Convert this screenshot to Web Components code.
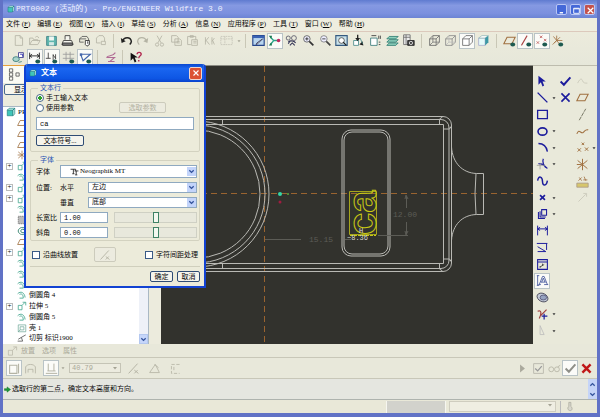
<!DOCTYPE html>
<html lang="zh-CN">
<head>
<meta charset="utf-8">
<title>PRT0002 (活动的) - Pro/ENGINEER Wildfire 3.0</title>
<style>
html,body{margin:0;height:100%}
body{font:7px/10px "Liberation Serif","Noto Sans CJK SC",serif;color:#080808;background:#e7e7da}
</style>
</head>
<body>
<pe-window></pe-window>
<script>
const N='#1c1c9c', G='#b4b3a4', K='#4a4a46', B='#a07040', T='#46a890';
const chk='M2 8l4 4 8-9';
const eye=`<ellipse cx="12" cy="13" rx="3" ry="2.5" fill="#1d5a50" stroke="none"/>`;
const cube=(c,f='none')=>`<path d="M2 6h8v8H2zM2 6l4-4h8v8l-4 4M10 6l4-4" stroke="${c}" fill="${f}"/>`;
const ICONS={
 part:`<path d="M2 5h9v9H2z" fill="#3fc6ba" stroke="#187a78"/><path d="M2 5l3-3h9l-3 3zM11 5l3-3v9l-3 3z" fill="#bff4ec" stroke="#187a78"/>`,
 new:`<path d="M4 2h6l3 3v9H4zM10 2v3h3" stroke="${G}"/>`,
 open:`<path d="M2 13V5h4l1 2h5v2M2 13l3-5h10l-3 5zM9 4c2-2 4-1 4 1" stroke="${G}"/>`,
 save:`<path d="M2 3h12v11H2z" fill="#5fb6ae" stroke="#3b7f84"/><path d="M5 3h6v5H5z" fill="#eef6f3" stroke="none"/><path d="M5 10h6v4H5z" fill="#d5e9e6" stroke="none"/>`,
 print:`<path d="M5 7V2h6v5M3 8h10l2 5H1z" fill="#f5f5ee" stroke="#333"/><path d="M2 11h12v3H2z" fill="#777" stroke="#333"/>`,
 lock:`<path d="M2 10V6l3-3h6l2 3v2M2 6h8M2 10h5" stroke="#555"/><path d="M9 8h5v5l-3 2-2-2z" fill="#fff" stroke="#222"/><path d="M12 9v3" stroke="#222"/>`,
 mail:`<path d="M3 11V5l3-3h5l2 3v4M3 11h5M9 9h5v4H9z" stroke="${G}"/>`,
 undo:`<path d="M3 9c2-6 10-6 11 0 0 2-1 3-2 4" stroke="#222" stroke-width="1.8"/><path d="M1 5l1 6 5-2z" fill="#222" stroke="none"/>`,
 redo:`<path d="M13 9C11 3 3 3 2 9c0 2 1 3 2 4" stroke="${G}" stroke-width="1.5"/><path d="M15 5l-1 6-5-2z" fill="${G}" stroke="none"/>`,
 cut:`<path d="M5 2l5 9M11 2L6 11" stroke="${G}"/><circle cx="5" cy="13" r="2" stroke="${G}"/><circle cx="11" cy="13" r="2" stroke="${G}"/>`,
 copy:`<path d="M2 2h6l2 2v6H2zM6 6h6l2 2v6H6zM8 9h4M8 11h4" stroke="${G}"/>`,
 paste:`<path d="M2 3h10v4M2 3v10h4M5 2h4v2H5zM7 7h7v7H7zM9 9h4M9 11h4" stroke="${G}"/>`,
 regen:`<path d="M3 4v9M3 9l4-5M4 8l4 5M11 4v9M11 9l3-4M12 8l2 5" stroke="${G}"/>`,
 sel:`<path d="M1 3h14v10H1zM1 6h14M6 3v10" stroke="#c4c3b6" stroke-dasharray="2 1"/>`,
 repaint:`<path d="M1 2h14v12H1z" fill="#b8d5ef" stroke="#24448a" stroke-width="1.4"/><path d="M1 2h14v3H1z" fill="#3a62b4" stroke="none"/><path d="M13 6l-6 6-2 1 1-2z" fill="#fff" stroke="#335"/>`,
 spin:`<path d="M7 8h6M7 8L3 4M7 8l-4 5" stroke="#2ba58a" stroke-width="1.6"/><circle cx="13" cy="8" r="2.2" fill="#c02860" stroke="none"/><path d="M1 2l4 0-1 4zM1 14l4 0-1-4z" fill="#1a7a50" stroke="none"/>`,
 orient:`<circle cx="4" cy="5" r="2.5" stroke="#556"/><circle cx="11" cy="5" r="3" stroke="#556"/><path d="M4 10c3-3 8-1 9 1M6 14l3-3 3 3M4 12l2-3" stroke="#335" stroke-width="1.3"/>`,
 zin:`<circle cx="6" cy="6" r="4" fill="#eef" stroke="#555"/><path d="M9 9l5 5" stroke="#333" stroke-width="2"/><path d="M4 6h4M6 4v4" stroke="#222"/>`,
 zout:`<circle cx="6" cy="6" r="4" fill="#eef" stroke="#777"/><path d="M9 9l5 5" stroke="#444" stroke-width="2"/><path d="M4 6h4" stroke="#222"/>`,
 fit:`<path d="M1 2h14v12H1z" fill="#c9e2ea" stroke="#355a80" stroke-width="1.4"/><circle cx="8" cy="8" r="3.5" fill="#fff" stroke="#444"/><path d="M10 10l4 4" stroke="#222" stroke-width="1.6"/>`,
 reor:`<path d="M2 8h6v6H2z" fill="#fff" stroke="#488"/><path d="M7 1v5" stroke="#222" stroke-width="1.6"/><path d="M4 5h6L7 9zM14 14l-5-1 4-4z" fill="#222" stroke="none"/><path d="M10 5l3 7" stroke="#488"/>`,
 views:`<path d="M2 5h8v9H2z" fill="#fff" stroke="#377"/><path d="M3 2h6M12 2v4M14 2v4M12 10h2M12 13h2" stroke="#333"/>`,
 layers:`<path d="M1 14l3-3h11l-3 3zM1 10l3-3h11l-3 3zM1 6l3-3h11l-3 3z" fill="#8fd0bc" stroke="#2b7a70"/>`,
 vmgr:`<path d="M2 1h8v12H2zM2 4h8M5 1v12" fill="#eee" stroke="#666"/><path d="M7 8h8v6H7z" fill="#444" stroke="#222"/><circle cx="11" cy="11" r="2" stroke="#eee"/>`,
 wire:cube('#666')+`<path d="M6 10h8M6 2v8l-4 4" stroke="#777"/>`,
 hidden:cube('#888')+`<path d="M6 10h8M6 2v8l-4 4" stroke="#bbb"/>`,
 nohid:cube('#666','#fff'),
 shade:`<path d="M2 5h8v9H2z" fill="#e5fbfa" stroke="#aac"/><path d="M2 5l4-3h8l-4 3z" fill="#fff" stroke="#9bb"/><path d="M10 5l4-3v8l-4 4z" fill="#3d97a5" stroke="none"/>`,
 dplane:`<path d="M1 12L5 4h10l-4 8z" stroke="${B}" stroke-width="1.3"/>`+eye,
 daxis:`<path d="M3 14L10 2" stroke="#a44" stroke-width="1.3"/>`+eye,
 dpoint:`<path d="M2 9l3 3M5 9l-3 3M6 2l3 3M9 2L6 5M11 6l3 3M14 6l-3 3" stroke="#b55"/>`+eye,
 dcsys:`<path d="M7 8V2M7 8L2 13M7 8h7M3 3l8 10M11 4L4 11" stroke="${B}"/>`+eye,
 s1:`<path d="M8 2h6v6H8z" fill="#fff" stroke="#338"/><path d="M10 4h3v3" stroke="#22a"/><ellipse cx="5" cy="10" rx="4" ry="3" fill="#a9d5cd" stroke="#377"/><path d="M8 14l4-1" stroke="#377"/>`,
 s2:`<path d="M2 2v8M14 2v8M2 6h12M5 4L2 6l3 2M11 4l3 2-3 2" stroke="#333" stroke-width="1.2"/>`+eye,
 s3:`<path d="M4 2v7M1 9h6M10 4v7M13 4v6M10 5l3 4" stroke="#333"/>`+eye,
 s4:`<path d="M1 4h14M1 9h14M5 1v11M10 1v11" stroke="#999"/>`+eye,
 s5:`<path d="M2 4h12L5 12z" stroke="#46a" stroke-width="1.4"/><path d="M1 3h3v3H1z" fill="#46a" stroke="none"/>`+eye,
 s6:`<path d="M3 8c3-4 7 0 11-6M5 13h8M3 8h10l-6 5" stroke="#b06a94" stroke-width="1.3"/>`,
 help:`<path d="M2 2v10l3-3 2 5 2-1-2-5h4z" fill="#111" stroke="none"/><path d="M10 4c0-3 5-3 5 0 0 2-3 2-3 5M12 11v2" stroke="#b0264e" stroke-width="1.7"/>`,
 arrow:`<path d="M3 1v11l3-3 2 5 2-1-2-5h4z" fill="${N}" stroke="none"/>`,
 line:`<path d="M2 2l12 12" stroke="${N}" stroke-width="1.7"/>`,
 rect:`<path d="M2 3h12v10H2z" stroke="${N}" stroke-width="1.6"/>`,
 circ:`<ellipse cx="8" cy="8" rx="5.500" ry="4.500" stroke="${N}" stroke-width="2"/>`,
 arc:`<path d="M3 3c6 0 10 4 11 10" stroke="${N}" stroke-width="1.7"/>`,
 fil:`<path d="M9 1c-2 5 0 8 5 12M3 7c4 0 7 1 9 5" stroke="${N}" stroke-width="1.5"/><path d="M1 9h10M5 6v8" stroke="#999"/>`,
 spl:`<path d="M2 7c1-7 6-5 6 1s5 6 6-1" stroke="${N}" stroke-width="1.8"/>`,
 pt:`<path d="M5 5l6 6M11 5l-6 6" stroke="${N}" stroke-width="2"/>`,
 edge:`<path d="M3 5v8h8M7 2h6v7H7zM5 4v7h7" stroke="${N}" stroke-width="1.3"/>`,
 dim:`<path d="M2 2v12M14 2v12M2 6h12M5 4L2 6l3 2M11 4l3 2-3 2" stroke="${N}" stroke-width="1.2"/>`,
 mod:`<path d="M1 3h13M13 3v8M2 7l10 6M2 13h10" stroke="${N}" stroke-width="1.2"/>`,
 con:`<path d="M2 2h12v12H2zM2 5h12" stroke="${N}" stroke-width="1.3"/><path d="M5 11l5-3M8 7v2M5 10v2" stroke="#333"/>`,
 text:`<path d="M2 2v12M1 2h3M1 14h3M3 13h3M10 13h5M4 13L8 3h2l4 10M6 10h6M9 5l-2 5M9 5l2 5" stroke="#3c4f98"/>`,
 pal:`<ellipse cx="8" cy="8" rx="7" ry="5" transform="rotate(25 8 8)" fill="#c3cad8" stroke="#445"/><ellipse cx="9" cy="8" rx="4" ry="3" fill="#96a3c0" stroke="#557"/>`,
 trim:`<path d="M2 4c5-2 5 3 2 9M13 2L6 9" stroke="#a04040" stroke-width="1.5"/><path d="M7 10h7M10 7v7" stroke="${N}" stroke-width="1.5"/>`,
 mir:`<path d="M5 2v11h5z" stroke="#bbb"/>`,
 ok:`<path d="${chk}" stroke="${N}" stroke-width="2.4"/>`,
 x:`<path d="M3 3l10 10M13 3L3 13" stroke="${N}" stroke-width="2"/>`,
 sk:`<path d="M2 10c3-6 5-6 6-3s3 3 6 3" stroke="#c8c6b8"/>`,
 plane:`<path d="M1 12L5 4h10l-4 8z" stroke="${B}" stroke-width="1.3"/>`,
 axis:`<path d="M4 15L12 1" stroke="#776" stroke-width="1.2" stroke-dasharray="5 1"/>`,
 curve:`<path d="M1 11c3-8 5 1 8-2s3-4 6-3" stroke="${B}" stroke-width="1.3"/>`,
 pts:`<path d="M2 9l4 4M6 9l-4 4M7 2l3 3M10 2L7 5M11 8l4 4M15 8l-4 4" stroke="${B}" stroke-width="1.2"/>`,
 csys:`<path d="M8 1v14M2 3l12 10M14 3L2 13M1 8h6" stroke="${B}" stroke-width="1.2"/>`,
 ana:`<path d="M1 10h14v5H1z" fill="#d6c66c" stroke="#a98"/><path d="M3 7l4-4M4 3l3 4M10 2l2 5M9 6h5" stroke="${B}"/>`,
 ref:`<path d="M3 13L12 4M9 3h4v4" stroke="#c8c6b8"/>`,
 ext:`<path d="M2 7h6v7H2zM9 2h5v5M8 7l5-5" stroke="${T}" stroke-width="1.3"/>`,
 rnd:`<path d="M1 6c5-5 11-2 12 6M4 7c4-2 6 1 6 6M4 13h6" stroke="${T}" stroke-width="1.4"/>`,
 shell:`<path d="M2 3h12v11H2zM5 6h6v5H5zM2 14l3-3" stroke="#5a9c8a"/>`,
 cutf:`<path d="M1 13h8L7 7l7-4M2 10l5-3" stroke="#444" stroke-width="1.2"/>`,
 dots:`<path d="M2 2h12v12H2z" fill="#bbb" stroke="#555" stroke-dasharray="2 1"/>`,
 rev:`<path d="M13 4c-5-4-11 0-11 4s6 8 11 4M12 6c-4-2-6 0-6 2s3 4 6 2" stroke="#34826e" stroke-width="1.5"/>`,
 extg:`<path d="M2 7h6v7H2zM9 2h5v5M8 7l5-5" stroke="${G}"/>`,
 solid:`<path d="M2 4h9v10H2zM13 2v12" stroke="${G}" stroke-width="1.3"/>`,
 surf:`<path d="M2 14V6c2-4 10-4 12 0v8M5 13V9h6v4" stroke="${G}"/>`,
 depth:`<path d="M1 14h14M4 2v9M11 2v9M3 11h10" stroke="${G}" stroke-width="1.2"/>`,
 flip:`<path d="M2 14L13 2M9 10l5 4M13 10l-4 4" stroke="${G}" stroke-width="1.2"/>`,
 thin:`<path d="M2 13L9 3l5 10zM8 3l5 4" stroke="${G}"/>`,
 brk:`<path d="M13 3H3v11h10M6 6v6" stroke="${G}" stroke-dasharray="4 2"/>`,
 play:`<path d="M5 3l6 5-6 5z" fill="#aaa99d" stroke="none"/>`,
 vchk:`<path d="M2 2h12v12H2z" stroke="#b4b3a8"/><path d="M4 8l3 3 5-6" stroke="#999" stroke-width="1.5"/>`,
 gls:`<circle cx="4" cy="9" r="3" stroke="${G}"/><circle cx="11" cy="9" r="3" stroke="${G}"/><path d="M12 6l3-2" stroke="${G}"/>`,
 okg:`<path d="${chk}" stroke="#8f8f88" stroke-width="2.4"/>`,
 xr:`<path d="M3 3l10 10M13 3L3 13" stroke="#c01818" stroke-width="3"/>`,
 nav:`<path d="M3 1h4v4H3zM3 6h4v4H3zM3 11h4v4H3zM11 6h4v4h-4z" stroke="#555"/>`,
 go:`<path d="M1 6h6V2l8 6-8 6v-4H1z" fill="#1f9a3a" stroke="#0a6a20"/>`,
 therm:`<path d="M7 2h3v6c3 2 2 6-1 6s-5-4-2-6z" fill="#d8d7cc" stroke="#a5a498"/>`,
 tt:`<path d="M1 4h9v3M6 4v8M8 7h7M11 7v7M9 14h4M4 12h4" stroke="#222" stroke-width="1.5"/>`,
 min:`<path d="M3 12h6" stroke="#fff" stroke-width="2.5"/>`,
 max:`<path d="M3 4h10v9H3zM3 5h10" stroke="#fff" stroke-width="1.6"/>`,
 close:`<path d="M3 3l10 10M13 3L3 13" stroke="#fff" stroke-width="2.2"/>`,
 dn:`<path d="M3 5l5 5 5-5" stroke="#33539c" stroke-width="3"/>`,
 up:`<path d="M3 11l5-5 5 5" stroke="#33539c" stroke-width="3"/>`,
 dd:`<path d="M4 6h8l-4 5z" fill="#333" stroke="none"/>`,
 ddg:`<path d="M4 6h8l-4 5z" fill="#a4a394" stroke="none"/>`
};
const define=(name,html)=>{
  const t=document.createElement('template');
  t.innerHTML=html;
  customElements.define(name,class extends HTMLElement{
    constructor(){super();this.attachShadow({mode:'open'}).append(t.content.cloneNode(true));}
  });
};
customElements.define('pe-icon',class extends HTMLElement{
  connectedCallback(){
    if(!this.shadowRoot)this.attachShadow({mode:'open'});
    this.shadowRoot.innerHTML=`<style>:host{display:inline-block;width:12px;height:12px;flex:none}svg{display:block;width:100%;height:100%;fill:none}</style><svg viewBox="0 0 16 16" aria-hidden="true">${ICONS[this.getAttribute('name')]||''}</svg>`;
  }
});
customElements.define('pe-tool',class extends HTMLElement{
  connectedCallback(){
    if(!this.shadowRoot)this.attachShadow({mode:'open'});
    const n=this.getAttribute('name');
    this.shadowRoot.innerHTML=`<style>:host{display:block;flex:none;width:16px;height:16px}
    button{box-sizing:border-box;width:100%;height:100%;padding:0;margin:0;border:1px solid transparent;background:none;display:grid;place-items:center}
    pe-icon{width:13px;height:13px}
    :host([on]) button{background:#fbfbf8;border-color:#b9c3c6}
    :host([slim]){width:6px}:host([slim]) pe-icon{width:6px;height:6px}</style>
    <button type="button" aria-label="${this.getAttribute('label')||n}"><pe-icon name="${n}"></pe-icon></button>`;
  }
});
const tool=s=>s.split(' ').map(n=>{
  if(n==='dd'||n==='ddg')return `<pe-tool slim name="${n}"></pe-tool>`;
  return n.endsWith('*')?`<pe-tool on name="${n.slice(0,-1)}"></pe-tool>`:`<pe-tool name="${n}"></pe-tool>`;
}).join('');

define('pe-titlebar',`<style>
:host{display:flex;align-items:center;height:18px;padding:0 5px 0 4px;background:linear-gradient(#5f7bd0,#8599e2 30%,#7b90de 75%,#6c84d4);color:#eef1ff;font:8px/12px "Liberation Mono","Noto Sans CJK SC",monospace}
h1{flex:1;margin:0 0 0 1px;font:inherit;white-space:nowrap;font-weight:400}
.c{display:flex;gap:3px}
button{width:11px;height:11px;padding:1px;border:1px solid #b9c6f4;border-radius:2px;background:#4468d8;display:grid;place-items:center}
button.x{background:#c4524c}button pe-icon{width:9px;height:9px}
.p{width:8px;height:8px}</style>
<pe-icon class="p" name="part"></pe-icon><h1><slot></slot></h1>
<div class="c"><button aria-label="最小化"><pe-icon name="min"></pe-icon></button><button aria-label="最大化"><pe-icon name="max"></pe-icon></button><button class="x" aria-label="关闭"><pe-icon name="close"></pe-icon></button></div>`);

const menus=[['文件','F'],['编辑','E'],['视图','V'],['插入','I'],['草绘','S'],['分析','A'],['信息','N'],['应用程序','P'],['工具','T'],['窗口','W'],['帮助','H']];
define('pe-menubar',`<style>
:host{display:block;background:#eeeddf;border-bottom:1px solid #dcc9bc}
nav{display:flex;gap:7px;padding:1px 3px 2px}
button{font:inherit;color:inherit;line-height:10px;border:0;padding:0;background:none;white-space:nowrap}</style>
<nav>${menus.map(m=>`<button type="button">${m[0]} (<u>${m[1]}</u>)</button>`).join('')}</nav>`);

define('pe-toolbars',`<style>
:host{display:block;padding:0 3px 0 7px;background:linear-gradient(#ecebdc,#e6e7da)}
.r{display:flex;height:17px;align-items:center}
.r+.r{height:16px}
.g{display:flex;justify-content:space-between;flex:none}
i{width:1px;height:14px;background:#c9c7b6;margin:0 4px;flex:none}
.a{width:99px}.b{width:123px}.c{width:167px}.d{width:66px}.e{width:65px}.f{width:83px}</style>
<div class="r"><div class="g a">${tool('new open save print lock mail')}</div><i></i>
<div class="g b">${tool('undo redo cut copy paste regen sel ddg')}</div><i></i>
<div class="g c">${tool('repaint spin* orient zin zout fit reor views layers vmgr')}</div><i></i>
<div class="g d">${tool('wire hidden nohid* shade')}</div><i></i>
<div class="g e">${tool('dplane daxis* dpoint* dcsys')}</div></div>
<div class="r"><div class="g f">${tool('s1 s2* s3* s4 s5*')}</div><i></i>${tool('s6')}<i></i>${tool('help')}</div>`);

const rows=[['','plane'],['','plane'],['','plane'],['','csys'],['+','ext'],['','rnd'],['+','ext'],['+','ext'],['','rnd'],['','dots'],['','rev'],['','plane'],['+','ext'],['','rnd'],['','rnd'],['','rnd'],['','rnd','倒圆角 4'],['+','ext','拉伸 5'],['','rnd','倒圆角 5'],['','shell','壳 1'],['','cutf','切剪 标识1900']];
define('pe-navigator',`<style>
:host{display:flex;flex-direction:column;width:158px;background:#ecebdd;box-sizing:border-box;min-height:0;border-top:1px solid #e9a23c}
.tab{height:17px;padding:0 4px;background:#fbfbf4;width:22px;display:flex;align-items:center}
.tab pe-icon{width:13px;height:13px}
.bar{padding:1px 1px 11px}
.bar button{font:inherit;line-height:8px;height:11px;padding:0 9px;border:1px solid #4a6a8c;border-radius:2px;background:#f7f6ee}
.tree{flex:1;min-height:0;display:flex;margin-right:12px;background:#fff;border:1px solid #a9b8c4;border-width:1px 1px 0 0}
ul{flex:1;list-style:none;margin:0;padding:0 0 0 1px;display:flex;flex-direction:column}
li{flex:1;min-height:0;display:flex;align-items:center;gap:2px;padding-left:3px;white-space:nowrap}
li.root{padding-left:2px}
.pm{width:5px;height:5px;flex:none;display:grid;place-items:center;margin-right:3px}
.pm.y{outline:1px solid #bbb;line-height:5px;font-size:7px}
pe-icon{width:10px;height:10px}
.sb{width:9px;background:#eef1f8;display:flex;flex-direction:column;justify-content:flex-end}
.sb button{height:10px;width:9px;border:1px solid #b4c8f0;background:#c6d6fa;padding:0;display:grid;place-items:center}
.sb pe-icon{width:7px;height:7px}</style>
<div class="tab"><pe-icon name="nav"></pe-icon></div>
<div class="bar"><button type="button">显示</button></div>
<div class="tree"><ul><li class="root"><pe-icon name="part"></pe-icon>PR</li>
${rows.map(r=>`<li><span class="pm ${r[0]?'y':''}">${r[0]}</span><pe-icon name="${r[1]}"></pe-icon>${r[2]||''}</li>`).join('')}</ul>
<div class="sb"><button type="button" aria-label="向下滚动"><pe-icon name="dn"></pe-icon></button></div></div>`);

define('pe-viewport',`<style>
:host{display:block;flex:1;min-width:0;min-height:0;background:#32322d;border-top:1px solid #8b8b83;overflow:hidden;position:relative}
svg{position:absolute;inset:0;width:100%;height:100%;fill:none}
text{font-family:"Liberation Mono",monospace}</style>
<svg viewBox="161 66 372 278" preserveAspectRatio="xMidYMid slice" role="img" aria-label="模型视图">
<g stroke="#9a6430" stroke-dasharray="6 4"><path d="M161 193.500H533M264.500 66V344"/></g>
<g stroke="#b9b9b4">
<path d="M161 116.500H443a8.500 8.500 0 0 1 8.500 8.500V263a8.500 8.500 0 0 1-8.500 8.500H161"/>
<path d="M161 119.500H441M161 268.500H441M449 127V261"/>
<path d="M161 124.500H443.500V263.500H161"/>
<path d="M439.500 124v-5l3-2M443.500 129h6l2-3M439.500 264v5l3 2M443.500 259h6l2 3"/>
<path d="M441 119.500a8 8 0 0 1 8 8M441 268.500a8 8 0 0 0 8-8"/>
<path d="M451.500 147c1 16 11 26 25 26.500h7V214.500h-7c-14 .5-24 10-25 26M476 173.500q-2 20 0 41"/>
<circle cx="196" cy="194" r="73"/><circle cx="196" cy="194" r="69"/><circle cx="196" cy="194" r="64"/>
<path d="M222.500 120v5M222.500 263v5"/>
<rect x="342" y="130" width="48" height="126" rx="9"/><rect x="344" y="132" width="44" height="122" rx="8"/></g>
<g stroke="#5c5c56"><path d="M265 239.500h36M345 239.500h6M406.500 196v12M406.500 222v12M378 235.500h30M405 199l1-4 2 4M405 231l1 4 2-4"/></g>
<g fill="#5c5c56" font-size="8"><text x="309" y="242">15.15</text><text x="393" y="217">12.00</text></g>
<g stroke="#c8c814"><path d="M349.500 191.500h27v43h-27z" stroke="#a5a51c"/>
<text transform="translate(376 235) rotate(-90)" font-size="40" style="font-family:'Liberation Sans',sans-serif;font-weight:700">ca</text>
<path d="M350 235.500h26" stroke-dasharray="3 1"/></g>
<g fill="#dcdcd2" font-size="7"><text x="347" y="240">~8.36</text><text x="359" y="233">H</text></g>
<circle cx="280" cy="194" r="2" fill="#35d6a6"/><circle cx="288" cy="194" r="1" fill="#58a83c"/><circle cx="280" cy="202" r="1.500" fill="#a01c40"/>
</svg>`);

const c1=['arrow','line','rect','circ','arc','fil','spl','pt','edge','dim','mod','con','text*','pal','trim','mir'];
const dds=[1,3,4,5,7,8,14,15];
const c3=['sk','plane','axis','curve','pts','csys','ana','ref'];
define('pe-sketch-tools',`<style>
:host{display:grid;grid-template-columns:16px 6px 18px 16px 6px;grid-template-rows:repeat(16,minmax(0,1fr));width:64px;box-sizing:border-box;padding:7px 0 5px 1px;background:#e9e9da;align-items:center;border-top:1px solid #bdbcae}
span{display:flex;justify-content:center}</style>
${c1.map((n,i)=>tool(n)+(dds.includes(i)?tool('dd'):'<span></span>')+`<span>${i==0?tool('ok'):i==1?tool('x'):''}</span>`+(c3[i]?tool(c3[i]):'<span></span>')+(i==4?tool('dd'):'<span></span>')).join('')}`);

define('pe-dashboard',`<style>
:host{display:block;background:#e8e8da;color:#aaa999}
.t{display:flex;align-items:center;gap:7px;height:13px;padding-left:4px;border-bottom:1px solid #c8c7b8}
.t button{font:inherit;color:inherit;border:0;background:none;padding:0}
.t pe-icon{margin-right:-4px;width:11px}
.b{display:flex;align-items:center;height:20px;padding:0 3px;border-bottom:1px solid #c8c7b8}
label{display:grid;width:52px;margin:0 4px}
select{grid-area:1/1;appearance:none;font:7px/8px "Liberation Mono",monospace;height:10px;padding:0 2px;border:1px solid #c5c4b6;background:#ecebdf;color:#aaa999;border-radius:0;opacity:1}
label pe-icon{grid-area:1/1;justify-self:end;align-self:center;width:8px;height:8px;margin-right:2px;pointer-events:none}
.s{flex:1}.m{margin-left:5px}</style>
<div class="t"><pe-icon name="extg"></pe-icon><button>放置</button><button>选项</button><button>属性</button></div>
<div class="b"><pe-tool on name="solid"></pe-tool><pe-tool name="surf"></pe-tool><pe-tool class="m" on name="depth"></pe-tool><pe-tool slim name="ddg"></pe-tool>
<label><select aria-label="深度" disabled><option>40.79</option></select><pe-icon name="ddg"></pe-icon></label>
<pe-tool name="flip"></pe-tool><pe-tool class="m" name="thin"></pe-tool><pe-tool class="m" name="brk"></pe-tool><span class="s"></span>
<pe-tool name="play"></pe-tool><pe-tool name="vchk"></pe-tool><pe-tool name="gls"></pe-tool><pe-tool on name="okg"></pe-tool><pe-tool name="xr"></pe-tool></div>`);

define('pe-messages',`<style>
:host{display:flex;align-items:center;height:20px;background:#e5e6e0;border-bottom:1px solid #aeb3ae;padding-left:1px}
p{flex:1;margin:0 0 0 1px}
pe-icon{width:7px;height:7px}
div{display:grid;align-self:stretch;width:9px;background:#c5d4f8}
button{border:0;background:none;padding:0;display:grid;place-items:center}</style>
<pe-icon name="go"></pe-icon><p><slot></slot></p><div><button aria-label="上"><pe-icon name="up"></pe-icon></button><button aria-label="下"><pe-icon name="dn"></pe-icon></button></div>`);

define('pe-statusbar',`<style>
:host{display:flex;height:13px;background:#e9e8d8;align-items:stretch;padding:1px 0 0;box-sizing:border-box}
.i{flex:1}.p{width:58px;background:#d2d2cc;border:solid #f6f6f0;border-width:0 1px}
label{display:grid;width:107px;margin:0 4px 0 3px}
select{grid-area:1/1;min-width:0;height:11px;appearance:none;border:1px solid #cfcdbf;border-radius:0;background:#efeee2;font:inherit}
label pe-icon{grid-area:1/1;justify-self:end;width:8px;height:8px;margin-right:2px;pointer-events:none}
.t{width:33px;border-left:1px solid #bbb;padding-left:3px}.t pe-icon{width:11px;height:11px}</style>
<div class="i"></div><div class="p"></div><label><select aria-label="选择过滤器"></select><pe-icon name="ddg"></pe-icon></label><div class="t"><pe-icon name="therm"></pe-icon></div>`);

define('pe-dialog',`<style>
:host{display:block;width:182px;box-sizing:border-box;border:2px solid #1242d2;border-top:0;border-radius:4px 4px 0 0;background:#ecebda;overflow:hidden}
header{display:flex;align-items:center;height:18px;padding:0 2px 0 3px;background:linear-gradient(#0a48d0,#1a66f0 25%,#0e56e4 80%,#0a42cc);color:#fff}
h2{flex:1;margin:0 0 0 4px;font-size:8px;line-height:12px;font-weight:700}
header pe-icon{width:8px;height:8px}
header button{width:13px;height:13px;padding:0;border:1px solid #f3d5cc;border-radius:2px;background:#dc5234;display:grid;place-items:center}
form{padding:1px 4px 4px}
button{font:inherit;color:inherit}
fieldset{margin:0;min-width:0;border:1px solid #d3d2c0;padding:0 5px;border-radius:2px}
legend{color:#2a54b4;padding:0 2px;margin-left:2px;line-height:10px}
label{white-space:nowrap}
input[type=radio]{appearance:none;width:8px;height:8px;margin:0 2px 0 0;border:1px solid #4a6a8c;border-radius:50%;background:#fff;flex:none}
input[type=radio]:checked{background:radial-gradient(circle,#2aa02a 2px,#fff 2px)}
input[type=checkbox]{appearance:none;width:8px;height:8px;margin:0 3px 0 0;border:1px solid #3a5a86;background:#fff;flex:none}
.opt{display:flex;align-items:center;height:10px}
.btn{height:11px;line-height:8px;padding:0;border:1px solid #2f4c74;border-radius:2px;background:#f5f4ec;text-align:center}
.btn:disabled{border-color:#cccbbc;color:#b3b2a2;background:#ecebdf}
.sym{width:48px;display:block}
.tx{box-sizing:border-box;font:inherit;line-height:9px;border:1px solid #8fa9c0;background:#fff;color:inherit;padding:0 3px;border-radius:0;min-width:0}
#t{width:100%;height:13px;margin:4px 0 5px;font-family:"Liberation Mono",monospace}
.two{display:grid;grid-template-columns:1fr 47px 28px}
.two .opt{grid-column:1}
.two .btn{grid-area:2/2;margin-top:-1px}
.sel{display:grid;margin-right:-3px}
.sel select{grid-area:1/1;appearance:none;font:inherit;line-height:9px;height:11px;padding:0 3px;border:1px solid #8fa9c0;border-radius:0;background:#fff;color:inherit;min-width:0}
.sel.f select{height:13px;padding-left:19px}
.sel pe-icon{grid-area:1/1;align-self:center;pointer-events:none}
.sel .d{justify-self:end;width:7px;height:7px;padding:1px;margin-right:1px;background:#c3d4fa}
.sel .tt{width:9px;height:9px;margin-left:10px}
.grid{display:grid;grid-template-columns:24px 28px 1fr;row-gap:4px;align-items:center;padding-bottom:2px}
.grid .w{grid-column:2/4}
.h{margin-right:-3px;display:grid;grid-template-columns:48px 1fr;gap:6px;align-items:center}
.h .tx{width:48px;height:11px;font-family:"Liberation Mono",monospace}
input[type=range]{appearance:none;width:100%;height:11px;margin:0;background:#e8e8dc;border:1px solid #cfd0c4;box-sizing:border-box;min-width:0}
input[type=range]::-webkit-slider-thumb{appearance:none;width:6px;height:11px;margin-top:0;background:#f4f8f0;border:1px solid #3f8266;box-sizing:border-box}
.ck{display:flex;align-items:center;margin:6px 0 4px;height:15px;padding:0 2px}
.ck .opt:last-child{margin-left:auto}
.sq{width:22px;height:15px;display:grid;place-items:center;margin-left:16px}
.ft{border-top:1px solid #d0cfbd;padding-top:4px;display:flex;justify-content:flex-end;gap:4px}
.ft .btn{width:23px}
#f1{padding-bottom:5px}#f2{margin-top:3px}</style>
<header><pe-icon name="part"></pe-icon><h2>文本</h2><button type="button" aria-label="关闭"><pe-icon name="close"></pe-icon></button></header>
<form><fieldset id="f1"><legend>文本行</legend>
<div class="two"><label class="opt"><input type="radio" name="m" checked>手工输入文本</label><label class="opt"><input type="radio" name="m">使用参数</label><button type="button" class="btn" disabled>选取参数</button></div>
<input class="tx" id="t" aria-label="文本行" value="ca">
<button type="button" class="btn sym">文本符号...</button></fieldset>
<fieldset id="f2"><legend>字体</legend><div class="grid">
<label for="a">字体</label><div class="sel f w"><select id="a"><option>Neographik MT</option></select><pe-icon class="tt" name="tt"></pe-icon><pe-icon class="d" name="dn"></pe-icon></div>
<span>位置:</span><label for="b">水平</label><div class="sel"><select id="b"><option>左边</option></select><pe-icon class="d" name="dn"></pe-icon></div>
<span></span><label for="c">垂直</label><div class="sel"><select id="c"><option>底部</option></select><pe-icon class="d" name="dn"></pe-icon></div>
<label for="d">长宽比</label><div class="w h"><input class="tx" id="d" value="1.00"><input type="range" aria-label="长宽比"></div>
<label for="e">斜角</label><div class="w h"><input class="tx" id="e" value="0.00"><input type="range" aria-label="斜角"></div>
</div></fieldset>
<div class="ck"><label class="opt"><input type="checkbox">沿曲线放置</label><button type="button" class="btn sq" disabled aria-label="反向"><pe-icon name="flip"></pe-icon></button><label class="opt"><input type="checkbox">字符间距处理</label></div>
<div class="ft"><button type="button" class="btn">确定</button><button type="button" class="btn">取消</button></div></form>`);

define('pe-window',`<style>
:host{display:flex;flex-direction:column;min-height:100vh;box-sizing:border-box;border:solid #6172c6;border-width:0 3px 4px;position:relative;overflow:hidden}
pe-titlebar{margin:0 -3px;padding-left:7px}
main{flex:1 0 276px;display:flex;min-height:0}
pe-dialog{position:absolute;left:21px;top:64px}</style>
<pe-titlebar>PRT0002 (活动的) - Pro/ENGINEER Wildfire 3.0</pe-titlebar>
<pe-menubar></pe-menubar><pe-toolbars></pe-toolbars>
<main><pe-navigator></pe-navigator><pe-viewport></pe-viewport><pe-sketch-tools></pe-sketch-tools></main>
<pe-dashboard></pe-dashboard><pe-messages>选取行的第二点，确定文本高度和方向。</pe-messages><pe-statusbar></pe-statusbar>
<pe-dialog></pe-dialog>`);
</script>
</body>
</html>
